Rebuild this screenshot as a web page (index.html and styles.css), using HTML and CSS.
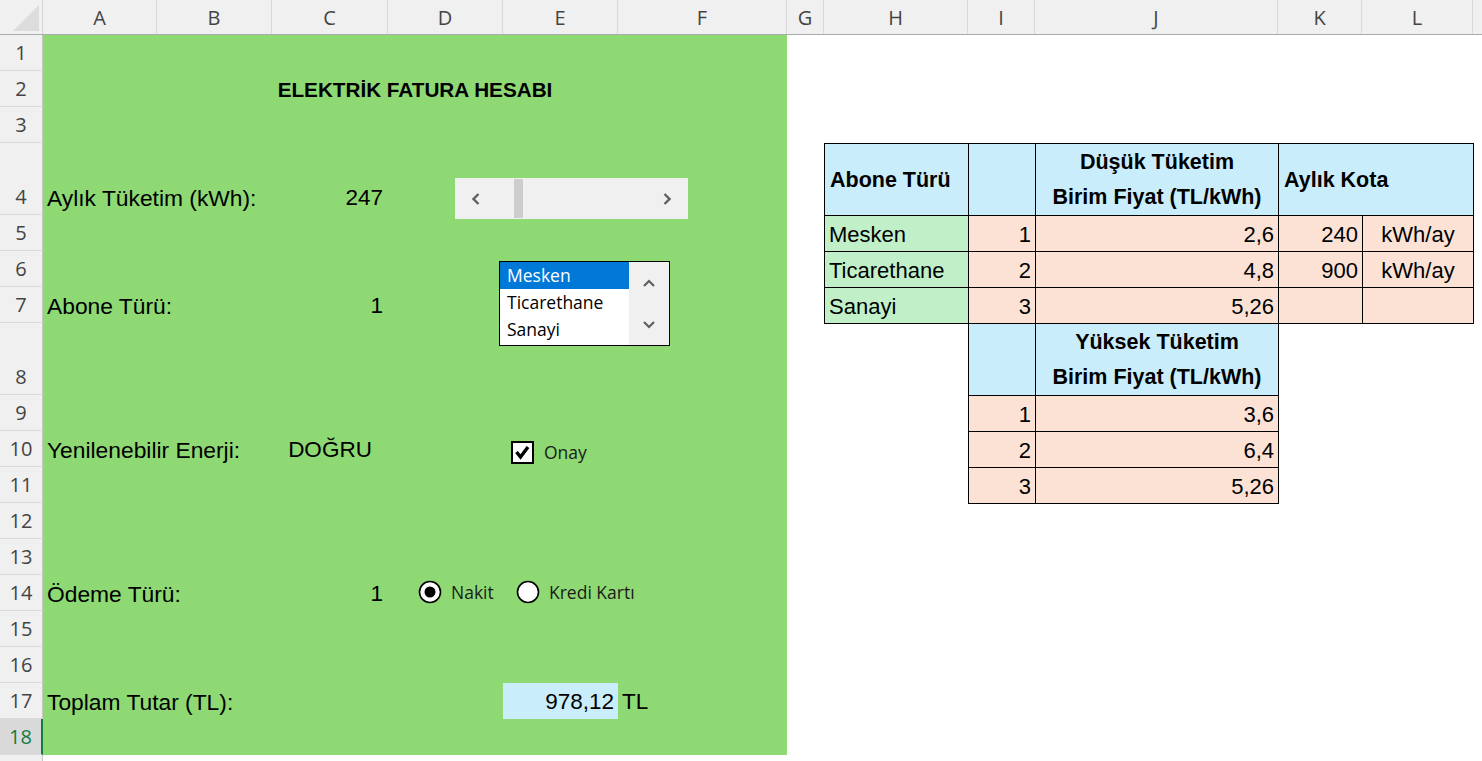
FILE: index.html
```html
<!DOCTYPE html>
<html lang="tr">
<head>
  <meta charset="UTF-8" />
  <title>Elektrik Fatura Hesabı</title>
  <link rel="stylesheet" href="styles.css">
</head>
<body>
  <div class="col-heads">
    <div class="corner">
      <svg width="42" height="34" viewBox="0 0 42 34"><polygon points="13,31 39,31 39,5" fill="#dcdcdc"/></svg>
    </div>
    <div class="ch w-a">A</div>
    <div class="ch w-b">B</div>
    <div class="ch w-c">C</div>
    <div class="ch w-d">D</div>
    <div class="ch w-e">E</div>
    <div class="ch w-f">F</div>
    <div class="ch w-g">G</div>
    <div class="ch w-h">H</div>
    <div class="ch w-i">I</div>
    <div class="ch w-j">J</div>
    <div class="ch w-k">K</div>
    <div class="ch w-l">L</div>
    <div class="ch rest"></div>
  </div>

  <div class="body">
    <div class="row-heads">
      <div class="rh">1</div>
      <div class="rh">2</div>
      <div class="rh">3</div>
      <div class="rh tall">4</div>
      <div class="rh">5</div>
      <div class="rh">6</div>
      <div class="rh">7</div>
      <div class="rh tall">8</div>
      <div class="rh">9</div>
      <div class="rh">10</div>
      <div class="rh">11</div>
      <div class="rh">12</div>
      <div class="rh">13</div>
      <div class="rh">14</div>
      <div class="rh">15</div>
      <div class="rh">16</div>
      <div class="rh">17</div>
      <div class="rh sel">18</div>
      <div class="rh"></div>
    </div>

    <div class="canvas">
      <!-- hesap formu, A1:F18 -->
      <div class="form">
        <div class="row"></div>
        <div class="row"><div class="c title">ELEKTRİK FATURA HESABI</div></div>
        <div class="row"></div>
        <div class="row tall">
          <div class="c lbl">Aylık Tüketim (kWh):</div>
          <div class="c num">247</div>
        </div>
        <div class="row"></div>
        <div class="row"></div>
        <div class="row">
          <div class="c lbl">Abone Türü:</div>
          <div class="c num">1</div>
        </div>
        <div class="row tall"></div>
        <div class="row"></div>
        <div class="row">
          <div class="c lbl">Yenilenebilir Enerji:</div>
          <div class="c bool">DOĞRU</div>
        </div>
        <div class="row"></div>
        <div class="row"></div>
        <div class="row"></div>
        <div class="row">
          <div class="c lbl">Ödeme Türü:</div>
          <div class="c num">1</div>
        </div>
        <div class="row"></div>
        <div class="row"></div>
        <div class="row">
          <div class="c lbl">Toplam Tutar (TL):</div>
          <div class="c total">978,12</div>
          <div class="c unit">TL</div>
        </div>
        <div class="row"></div>

        <!-- form denetimleri -->
        <div class="hscroll">
          <div class="sb-btn">
            <svg width="8" height="12" viewBox="0 0 8 12"><polyline points="6.5,1 1.5,6 6.5,11" fill="none" stroke="#606060" stroke-width="2.4"/></svg>
          </div>
          <div class="sb-track"><div class="sb-thumb"></div></div>
          <div class="sb-btn">
            <svg width="8" height="12" viewBox="0 0 8 12"><polyline points="1.5,1 6.5,6 1.5,11" fill="none" stroke="#606060" stroke-width="2.4"/></svg>
          </div>
        </div>

        <div class="listbox">
          <div class="lb-items">
            <div class="lb-item on">Mesken</div>
            <div class="lb-item">Ticarethane</div>
            <div class="lb-item">Sanayi</div>
          </div>
          <div class="lb-scroll">
            <svg width="12" height="8" viewBox="0 0 12 8"><polyline points="1,7 6,2 11,7" fill="none" stroke="#606060" stroke-width="2.2"/></svg>
            <svg width="12" height="8" viewBox="0 0 12 8"><polyline points="1,1 6,6 11,1" fill="none" stroke="#606060" stroke-width="2.2"/></svg>
          </div>
        </div>

        <div class="check">
          <svg width="23" height="23" viewBox="0 0 23 23">
            <rect x="1" y="1" width="21" height="21" fill="#fff" stroke="#000" stroke-width="2"/>
            <polyline points="5.5,11 9.5,16 17,6" fill="none" stroke="#000" stroke-width="3.4"/>
          </svg>
          <span>Onay</span>
        </div>

        <div class="radios">
          <div class="radio first">
            <svg width="24" height="24" viewBox="0 0 24 24">
              <circle cx="12" cy="12" r="10.5" fill="#fff" stroke="#000" stroke-width="1.6"/>
              <circle cx="12" cy="12" r="5.5" fill="#000"/>
            </svg>
            <span>Nakit</span>
          </div>
          <div class="radio">
            <svg width="24" height="24" viewBox="0 0 24 24">
              <circle cx="12" cy="12" r="10.5" fill="#fff" stroke="#000" stroke-width="1.6"/>
            </svg>
            <span>Kredi Kartı</span>
          </div>
        </div>
      </div>

      <!-- fiyat tablosu, H4:L11 -->
      <table class="lookup">
        <colgroup>
          <col class="k-h"><col class="k-i"><col class="k-j"><col class="k-k"><col class="k-l">
        </colgroup>
        <tr class="tall">
          <td class="hd">Abone Türü</td>
          <td class="hd"></td>
          <td class="hd wrap">Düşük Tüketim<br>Birim Fiyat (TL/kWh)</td>
          <td class="hd" colspan="2">Aylık Kota</td>
        </tr>
        <tr>
          <td class="name">Mesken</td>
          <td class="val">1</td>
          <td class="val">2,6</td>
          <td class="val">240</td>
          <td class="val mid">kWh/ay</td>
        </tr>
        <tr>
          <td class="name">Ticarethane</td>
          <td class="val">2</td>
          <td class="val">4,8</td>
          <td class="val">900</td>
          <td class="val mid">kWh/ay</td>
        </tr>
        <tr>
          <td class="name">Sanayi</td>
          <td class="val">3</td>
          <td class="val">5,26</td>
          <td class="val"></td>
          <td class="val"></td>
        </tr>
        <tr class="tall">
          <td class="blank"></td>
          <td class="hd"></td>
          <td class="hd wrap">Yüksek Tüketim<br>Birim Fiyat (TL/kWh)</td>
          <td class="blank"></td>
          <td class="blank"></td>
        </tr>
        <tr>
          <td class="blank"></td>
          <td class="val">1</td>
          <td class="val">3,6</td>
          <td class="blank"></td>
          <td class="blank"></td>
        </tr>
        <tr>
          <td class="blank"></td>
          <td class="val">2</td>
          <td class="val">6,4</td>
          <td class="blank"></td>
          <td class="blank"></td>
        </tr>
        <tr>
          <td class="blank"></td>
          <td class="val">3</td>
          <td class="val">5,26</td>
          <td class="blank"></td>
          <td class="blank"></td>
        </tr>
      </table>
    </div>
  </div>
</body>
</html>
```

FILE: styles.css
```css
* {
  margin: 0;
  padding: 0;
  box-sizing: border-box;
}
body {
  font-family: "Liberation Sans", Arial, sans-serif;
  background: #fff;
  color: #000;
  width: 1482px;
  height: 761px;
  overflow: hidden;
}

/* column headers */
.col-heads {
  display: flex;
  height: 35px;
  background: #f0f0f0;
  border-bottom: 1px solid #ababab;
}
.corner {
  width: 43px;
  flex: none;
  border-right: 1px solid #d4d4d4;
}
.corner svg {
  display: block;
}
.ch {
  flex: none;
  display: flex;
  align-items: center;
  justify-content: center;
  border-right: 1px solid #d9d9d9;
  font-family: "Open Sans", sans-serif;
  font-size: 20px;
  color: #444;
}
.w-a { width: 114px; }
.w-b { width: 115px; }
.w-c { width: 116px; }
.w-d { width: 115px; }
.w-e { width: 115px; }
.w-f { width: 169px; }
.w-g { width: 37px; }
.w-h { width: 144px; }
.w-i { width: 67px; }
.w-j { width: 243px; }
.w-k { width: 84px; }
.w-l { width: 111px; }
.ch.rest {
  flex: 1;
  border-right: none;
}

.body {
  display: flex;
}

/* row headers */
.row-heads {
  width: 43px;
  flex: none;
  background: #f0f0f0;
}
.rh {
  height: 36px;
  border-bottom: 1px solid #dadada;
  border-right: 1px solid #c6c6c6;
  display: flex;
  align-items: flex-end;
  justify-content: center;
  padding-bottom: 3px;
  font-family: "Open Sans", sans-serif;
  font-size: 20px;
  line-height: 28px;
  color: #444;
}
.rh.tall {
  height: 72px;
}
.rh.sel {
  background: #d9d9d9;
  color: #107c41;
  border-right: 2px solid #107c41;
}

.canvas {
  display: flex;
  align-items: flex-start;
}

/* form area */
.form {
  width: 744px;
  flex: none;
  background: #8ed973;
  position: relative;
}
.row {
  display: grid;
  grid-template-columns: 114px 115px 116px 115px 115px 169px;
  height: 36px;
}
.row.tall {
  height: 72px;
}
.c {
  display: flex;
  align-items: flex-end;
  padding-bottom: 3px;
  font-size: 22.5px;
  line-height: 28px;
  white-space: nowrap;
}
.title {
  grid-column: 1 / -1;
  justify-content: center;
  font-weight: bold;
  font-size: 20.7px;
}
.lbl {
  grid-column: 1 / span 2;
  padding-left: 4px;
  font-size: 22.8px;
}
.num {
  grid-column: 3;
  justify-content: flex-end;
  padding-right: 5px;
}
.bool {
  grid-column: 3;
  justify-content: center;
}
.total {
  grid-column: 5;
  justify-content: flex-end;
  padding-right: 4px;
  background: #caedfb;
}
.unit {
  grid-column: 6;
  padding-left: 4px;
}

/* controls */
.hscroll {
  position: absolute;
  left: 412px;
  top: 143px;
  width: 233px;
  height: 41px;
  background: #f0f0f0;
  display: flex;
}
.sb-btn {
  width: 42px;
  display: flex;
  align-items: center;
  justify-content: center;
}
.sb-track {
  flex: 1;
  padding: 1px 0;
}
.sb-thumb {
  width: 9px;
  height: 100%;
  margin-left: 17px;
  background: #cdcdcd;
}
.listbox {
  position: absolute;
  left: 456px;
  top: 226px;
  width: 171px;
  height: 85px;
  border: 1px solid #000;
  background: #fff;
  display: flex;
  font-family: "Open Sans", sans-serif;
  font-size: 17.5px;
}
.lb-items {
  flex: 1;
}
.lb-item {
  height: 27px;
  line-height: 27px;
  padding-left: 7px;
  color: #000;
}
.lb-item.on {
  background: #0078d7;
  color: #fff;
}
.lb-scroll {
  width: 40px;
  background: #f0f0f0;
  display: flex;
  flex-direction: column;
  justify-content: space-between;
  align-items: center;
  padding: 17px 0 16px;
}
.lb-scroll svg {
  display: block;
}
.check {
  position: absolute;
  left: 468px;
  top: 405px;
  display: flex;
  align-items: center;
  gap: 10px;
  font-family: "Open Sans", sans-serif;
  font-size: 17.5px;
  color: #1a1a1a;
}
.check svg,
.radio svg {
  display: block;
}
.radios {
  position: absolute;
  left: 375px;
  top: 545px;
  display: flex;
  font-family: "Open Sans", sans-serif;
  font-size: 17.5px;
  color: #1a1a1a;
}
.radio {
  display: flex;
  align-items: center;
  gap: 9px;
}
.radio.first {
  width: 98px;
}

/* lookup table */
.lookup {
  margin-top: 108px;
  margin-left: 37px;
  border-collapse: collapse;
  table-layout: fixed;
  width: 649px;
}
.k-h { width: 144px; }
.k-i { width: 67px; }
.k-j { width: 243px; }
.k-k { width: 84px; }
.k-l { width: 111px; }
.lookup td {
  height: 36px;
  border: 1px solid #000;
  font-size: 22px;
  line-height: 28px;
  padding: 0 4px 2px;
  vertical-align: bottom;
  white-space: nowrap;
  overflow: hidden;
}
.lookup tr.tall td {
  height: 72px;
}
.lookup td.hd {
  background: #caedfb;
  font-weight: bold;
  font-size: 21.5px;
  vertical-align: middle;
  padding: 0 5px;
}
.lookup td.wrap {
  text-align: center;
  line-height: 35px;
}
.lookup td.name {
  background: #c1f0c8;
}
.lookup td.val {
  background: #fbe2d5;
  text-align: right;
}
.lookup td.mid {
  text-align: center;
}
.lookup td.blank {
  border: none;
  background: transparent;
}
```
